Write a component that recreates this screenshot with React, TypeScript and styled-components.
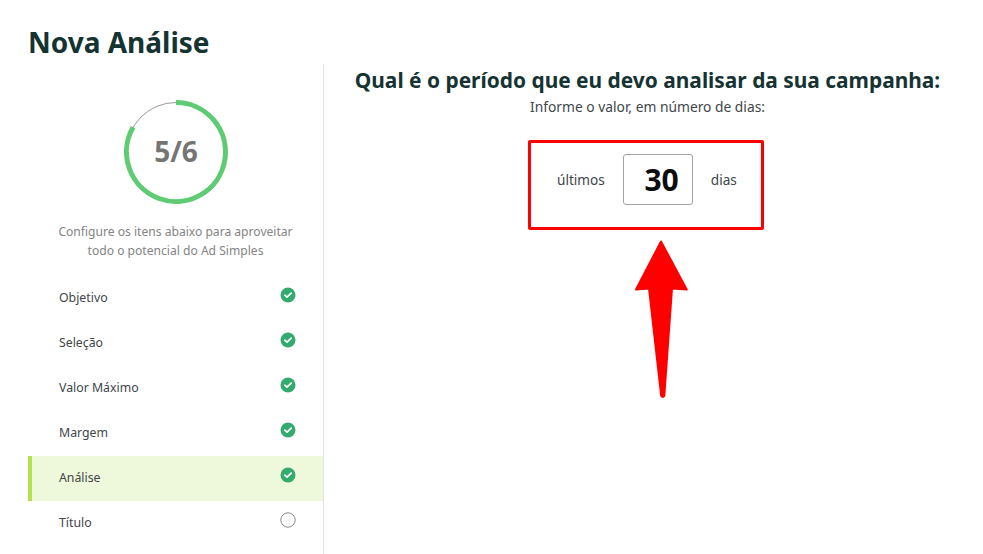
import React from "react";
import styled, { createGlobalStyle } from "styled-components";

const GlobalStyle = createGlobalStyle`
  html, body {
    margin: 0;
    padding: 0;
    background: #fff;
    font-family: "Noto Sans", "Open Sans", sans-serif;
  }
`;

const Page = styled.div`
  width: 983px;
  height: 554px;
  overflow: hidden;
  box-sizing: border-box;
  padding: 24px 0 0 28px;
`;

const Title = styled.h1`
  margin: 0;
  height: 40px;
  font-size: 28px;
  line-height: 36px;
  font-weight: 700;
  color: #163333;
`;

const Columns = styled.div`
  display: flex;
`;

const Sidebar = styled.aside`
  width: 296px;
  height: 490px;
  flex: none;
  box-sizing: border-box;
  border-right: 1px solid #e3e3e3;
  padding-top: 36px;
`;

const Progress = styled.div`
  position: relative;
  width: 104px;
  height: 104px;
  margin: 0 auto 0 96px;
`;

const ProgressLabel = styled.div`
  position: absolute;
  inset: -2px 0 0;
  display: flex;
  align-items: center;
  justify-content: center;
  font-size: 28px;
  font-weight: 700;
  color: #757575;
`;

const Hint = styled.p`
  width: 295px;
  margin: 18px 0 16px;
  text-align: center;
  font-size: 12.1px;
  line-height: 19px;
  color: #848484;
`;

const Step = styled.div<{ $active?: boolean }>`
  height: 45px;
  box-sizing: border-box;
  display: flex;
  justify-content: space-between;
  padding: 0 27px 0 ${(p) => (p.$active ? 27 : 31)}px;
  background: ${(p) => (p.$active ? "#eef8db" : "transparent")};
  border-left: ${(p) => (p.$active ? "4px solid #b2e24f" : "none")};
`;

const StepName = styled.span`
  font-size: 12.3px;
  line-height: 44px;
  color: #40464a;
`;

const StepIcon = styled.svg`
  width: 16px;
  height: 16px;
  margin-top: 11px;
`;

const Main = styled.main`
  width: 647px;
  flex: none;
  display: flex;
  flex-direction: column;
  align-items: center;
  padding-top: 2px;
`;

const Question = styled.h2`
  margin: 0;
  font-size: 20.9px;
  line-height: 28px;
  font-weight: 700;
  color: #163333;
  white-space: nowrap;
`;

const Subtitle = styled.p`
  margin: 3px 0 0;
  font-size: 13.8px;
  line-height: 20px;
  color: #40464a;
`;

const Highlight = styled.div`
  margin: 23px 3px 0 0;
  width: 236px;
  height: 90px;
  box-sizing: border-box;
  border: 3px solid #f00;
  border-radius: 2px;
  display: flex;
  align-items: center;
  padding: 0 0 12px 26px;
`;

const Unit = styled.span`
  font-size: 13.6px;
  color: #40464a;
`;

const NumberBox = styled.div`
  width: 70px;
  height: 51px;
  box-sizing: border-box;
  margin: 0 18px;
  border: 1px solid #a3a3a3;
  border-radius: 3px;
  display: flex;
  align-items: center;
  justify-content: flex-end;
  padding-right: 13px;
  font-size: 30px;
  font-weight: 700;
  color: #0c0c0c;
`;

const Arrow = styled.svg`
  width: 56px;
  height: 160px;
  margin-top: 9px;
  margin-left: 28px;
`;

const steps = [
  { name: "Objetivo", done: true },
  { name: "Seleção", done: true },
  { name: "Valor Máximo", done: true },
  { name: "Margem", done: true },
  { name: "Análise", done: true, active: true },
  { name: "Título", done: false },
];

const Status = ({ done }: { done: boolean }) => (
  <StepIcon viewBox="0 0 16 16">
    {done ? (
      <>
        <circle cx="8" cy="8" r="7.5" fill="#33aa6e" />
        <path d="M4.8 8.2 7 10.2 11.2 6.2" fill="none" stroke="#fff" strokeWidth="1.7" strokeLinecap="round" strokeLinejoin="round" />
      </>
    ) : (
      <circle cx="8" cy="8" r="7.2" fill="none" stroke="#8a8a8a" strokeWidth="1" />
    )}
  </StepIcon>
);

const App = () => (
  <Page>
    <GlobalStyle />
    <Title>Nova Análise</Title>
    <Columns>
      <Sidebar>
        <Progress>
          <svg width="104" height="104" viewBox="0 0 104 104">
            <circle cx="52" cy="52" r="49.5" fill="none" stroke="#9a9a9a" strokeWidth="1" />
            <path d="M52 2.5A49.5 49.5 0 1 1 9.1 27.25" fill="none" stroke="#5fcb72" strokeWidth="5" />
          </svg>
          <ProgressLabel>5/6</ProgressLabel>
        </Progress>
        <Hint>
          Configure os itens abaixo para aproveitar
          <br />
          todo o potencial do Ad Simples
        </Hint>
        {steps.map((s) => (
          <Step key={s.name} $active={s.active}>
            <StepName>{s.name}</StepName>
            <Status done={s.done} />
          </Step>
        ))}
      </Sidebar>
      <Main>
        <Question>Qual é o período que eu devo analisar da sua campanha:</Question>
        <Subtitle>Informe o valor, em número de dias:</Subtitle>
        <Highlight>
          <Unit>últimos</Unit>
          <NumberBox>30</NumberBox>
          <Unit>dias</Unit>
        </Highlight>
        <Arrow viewBox="0 0 56 160">
          <path
            d="M27 2.5 L52.7 50.5 L38 49.5 L30.3 157 Q28.7 159 27.2 157 L15 49.5 L2 50.5 Z"
            fill="#f00"
            stroke="#f00"
            strokeWidth="2"
            strokeLinejoin="round"
          />
        </Arrow>
      </Main>
    </Columns>
  </Page>
);

export default App;
